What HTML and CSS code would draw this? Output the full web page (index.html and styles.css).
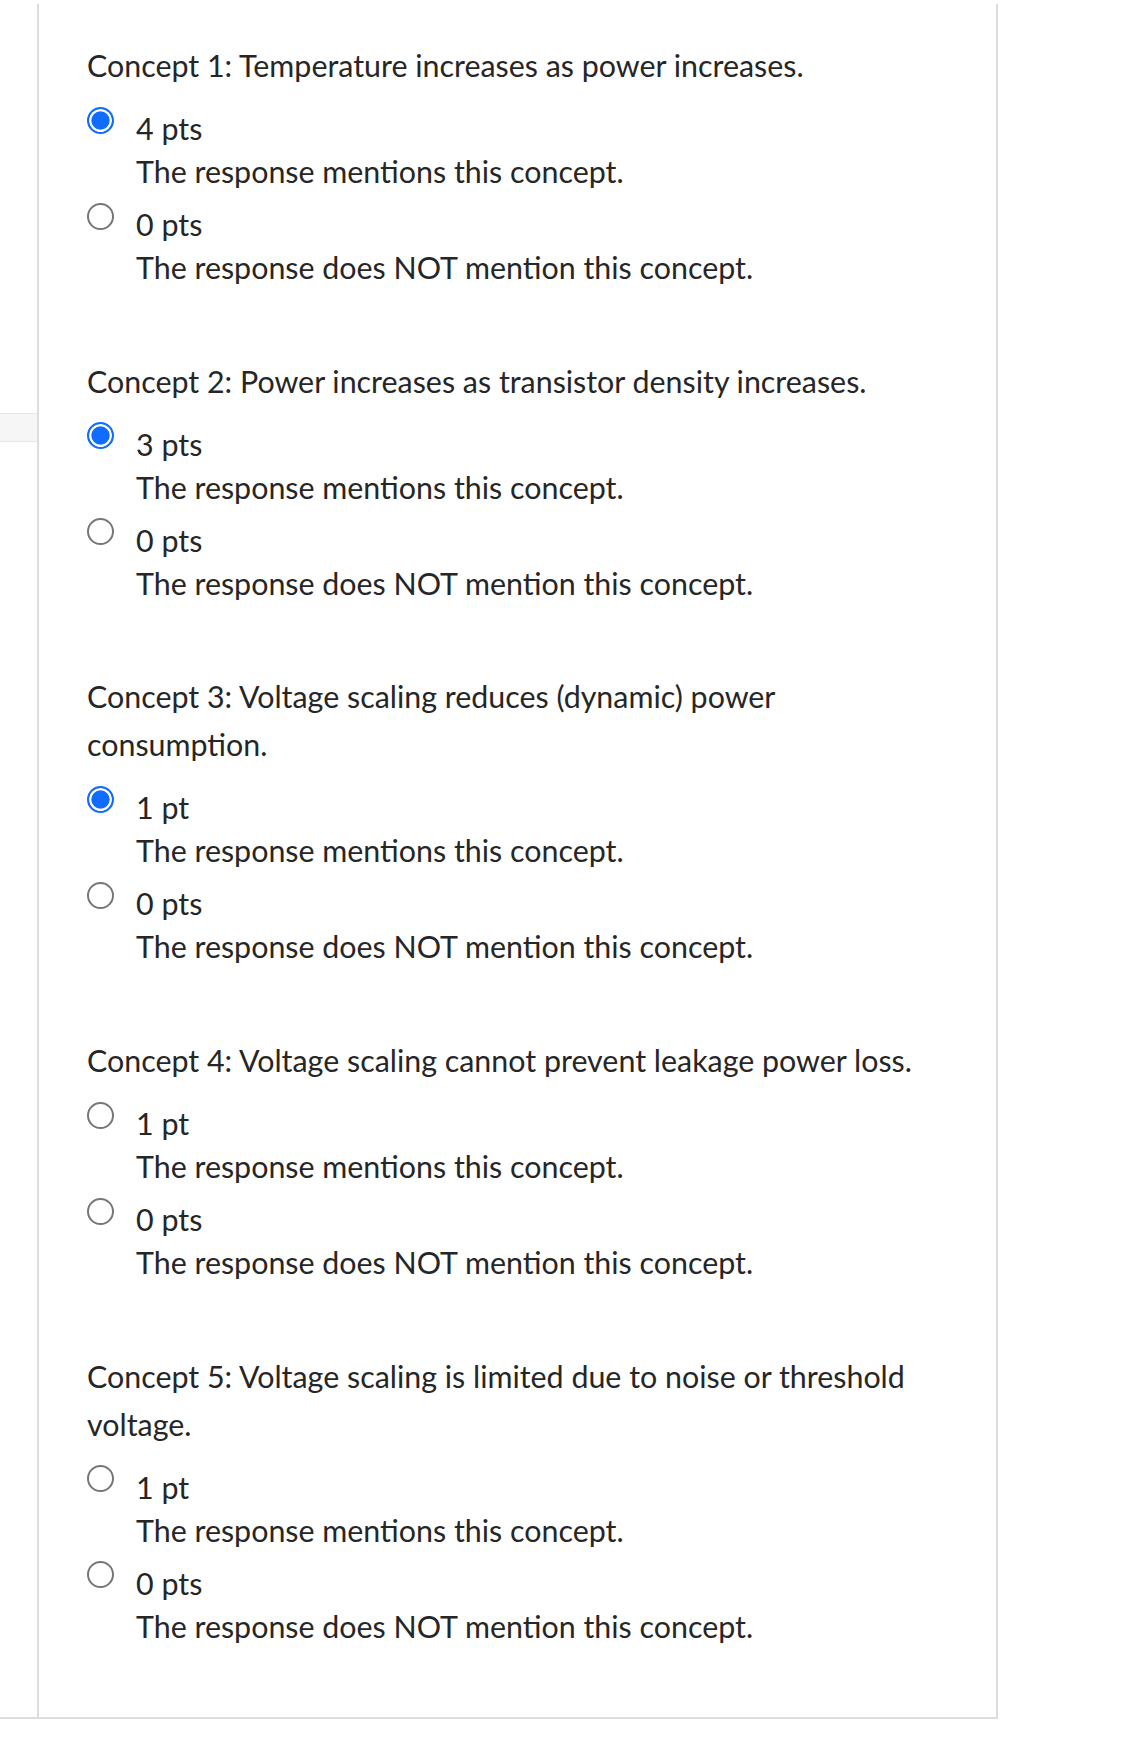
FILE: index.html
```html
<!DOCTYPE html>
<html lang="en">
<head>
<meta charset="utf-8">
<title>Rubric</title>
<link rel="stylesheet" href="styles.css">
</head>
<body>
<div class="page">
  <div class="gutter"><div class="gutter-bar"></div></div>
  <div class="panel">
    <div class="concept">
      <div class="concept-title">Concept 1: Temperature increases as power increases.</div>
      <label class="option">
        <input class="radio" type="radio" name="c1" checked>
        <span class="option-text"><span class="pts">4 pts</span><span class="desc">The response mentions this concept.</span></span>
      </label>
      <label class="option">
        <input class="radio" type="radio" name="c1">
        <span class="option-text"><span class="pts">0 pts</span><span class="desc">The response does NOT mention this concept.</span></span>
      </label>
    </div>
    <div class="concept">
      <div class="concept-title">Concept 2: Power increases as transistor density increases.</div>
      <label class="option">
        <input class="radio" type="radio" name="c2" checked>
        <span class="option-text"><span class="pts">3 pts</span><span class="desc">The response mentions this concept.</span></span>
      </label>
      <label class="option">
        <input class="radio" type="radio" name="c2">
        <span class="option-text"><span class="pts">0 pts</span><span class="desc">The response does NOT mention this concept.</span></span>
      </label>
    </div>
    <div class="concept">
      <div class="concept-title">Concept 3: Voltage scaling reduces (dynamic) power consumption.</div>
      <label class="option">
        <input class="radio" type="radio" name="c3" checked>
        <span class="option-text"><span class="pts">1 pt</span><span class="desc">The response mentions this concept.</span></span>
      </label>
      <label class="option">
        <input class="radio" type="radio" name="c3">
        <span class="option-text"><span class="pts">0 pts</span><span class="desc">The response does NOT mention this concept.</span></span>
      </label>
    </div>
    <div class="concept">
      <div class="concept-title">Concept 4: Voltage scaling cannot prevent leakage power loss.</div>
      <label class="option">
        <input class="radio" type="radio" name="c4">
        <span class="option-text"><span class="pts">1 pt</span><span class="desc">The response mentions this concept.</span></span>
      </label>
      <label class="option">
        <input class="radio" type="radio" name="c4">
        <span class="option-text"><span class="pts">0 pts</span><span class="desc">The response does NOT mention this concept.</span></span>
      </label>
    </div>
    <div class="concept">
      <div class="concept-title">Concept 5: Voltage scaling is limited due to noise or threshold voltage.</div>
      <label class="option">
        <input class="radio" type="radio" name="c5">
        <span class="option-text"><span class="pts">1 pt</span><span class="desc">The response mentions this concept.</span></span>
      </label>
      <label class="option">
        <input class="radio" type="radio" name="c5">
        <span class="option-text"><span class="pts">0 pts</span><span class="desc">The response does NOT mention this concept.</span></span>
      </label>
    </div>
  </div>
</div>
</body>
</html>
```
FILE: styles.css
```css
html, body {
  margin: 0;
  padding: 0;
  background: #ffffff;
}

body {
  font-family: "Lato", "Liberation Sans", sans-serif;
  font-size: 30.4px;
  color: #262626;
  padding-top: 4px;
}

.page {
  display: flex;
  width: 998px;
  border-bottom: 2px solid #dddddd;
}

.gutter {
  width: 37px;
  flex: none;
  padding-top: 409px;
}

.gutter-bar {
  height: 27px;
  background: #f6f6f6;
  border-top: 1px solid #e6e6e6;
  border-bottom: 1px solid #e6e6e6;
}

.panel {
  flex: 1;
  border-left: 2px solid #dddddd;
  border-right: 2px solid #dddddd;
  padding: 37px 60px 2px 48px;
}

.concept {
  display: flex;
  flex-direction: column;
  margin-bottom: 67.7px;
}

.concept-title {
  line-height: 48px;
  margin-bottom: 18px;
}

.option {
  display: flex;
  align-items: flex-start;
  gap: 22px;
  cursor: pointer;
}

.option + .option {
  margin-top: 10px;
}

.radio {
  appearance: none;
  -webkit-appearance: none;
  margin: -0.5px 0 0 0;
  width: 27px;
  height: 27px;
  flex: none;
  box-sizing: border-box;
  border-radius: 50%;
  border: 2px solid #767676;
  background: #ffffff;
}

.radio:checked {
  border: 2.5px solid #0f6cff;
  background: #0f6cff;
  box-shadow: inset 0 0 0 2.3px #ffffff;
}

.option-text {
  display: flex;
  flex-direction: column;
}

.pts,
.desc {
  line-height: 43px;
}
```
